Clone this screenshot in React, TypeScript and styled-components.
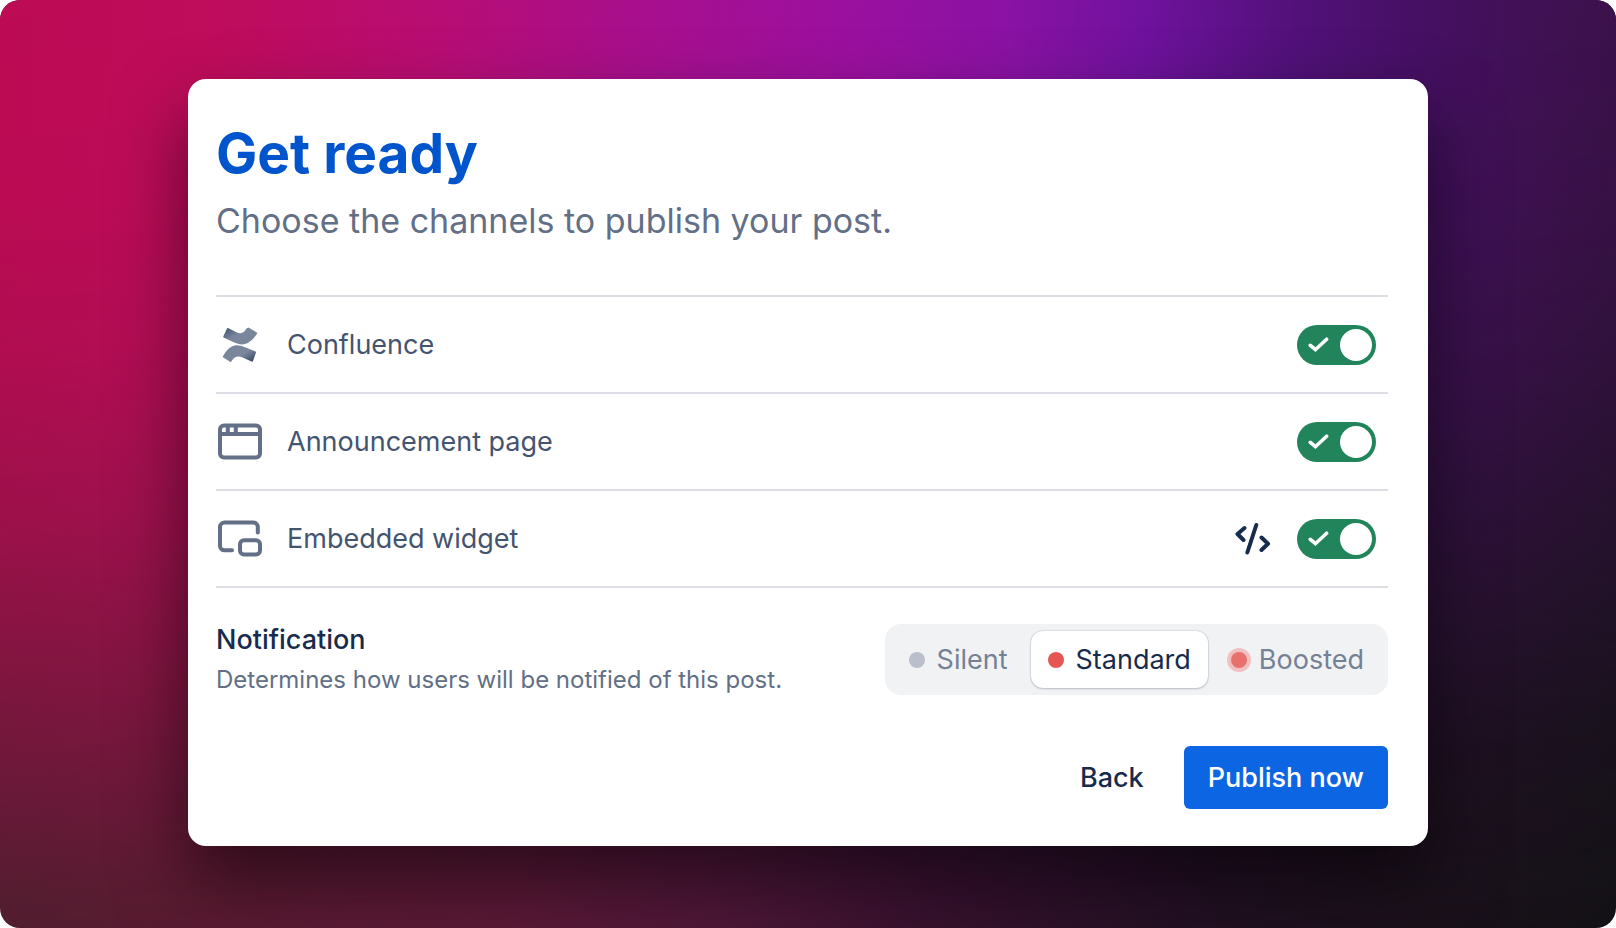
import React, { useState } from "react";
import styled, { createGlobalStyle, css } from "styled-components";

const GlobalStyle = createGlobalStyle`
  *, *::before, *::after { box-sizing: border-box; }
  body {
    margin: 0;
    background: #fff;
    font-family: Inter, "Liberation Sans", sans-serif;
    -webkit-font-smoothing: antialiased;
  }
`;

const Stage = styled.main`
  position: relative;
  isolation: isolate;
  min-height: 100vh;
  display: flex;
  align-items: center;
  justify-content: center;
  padding: 79px 24px 82px;
  border-radius: 20px;
  overflow: hidden;
  background: linear-gradient(90deg, #43202a 0%, #4f1d2c 14%, #541b30 32%, #481830 45%, #331228 58%, #20101f 75%, #141216 100%);

  /* bright band that fades towards the bottom */
  &::before {
    content: "";
    position: absolute;
    inset: 0;
    z-index: -1;
    background: linear-gradient(94deg, #bd0b54 0%, #c00c5c 13%, #b90d74 26%, #a90f8e 38%, #9d10a0 50%, #8c12a6 60%, #7112a0 68%, #53117c 77%, #461064 85%, #401152 93%, #381246 100%);
    mask-image: linear-gradient(174deg, #000 0%, rgba(0, 0, 0, 0.98) 18%, rgba(0, 0, 0, 0.89) 33%, rgba(0, 0, 0, 0.72) 48%, rgba(0, 0, 0, 0.44) 65%, rgba(0, 0, 0, 0.14) 82%, transparent 100%);
  }
`;

const Card = styled.section`
  width: 100%;
  max-width: 1240px;
  display: flex;
  flex-direction: column;
  padding: 40px 40px 37px 28px;
  border-radius: 18px;
  background: #fff;
  box-shadow: 0 36px 72px rgba(0, 0, 0, 0.55);
`;

const Title = styled.h1`
  margin: 0;
  font-size: 55px;
  line-height: 68px;
  font-weight: 700;
  color: #0055cc;
`;

const Subtitle = styled.p`
  margin: 12px 0 0;
  font-size: 34px;
  line-height: 44px;
  color: #626f86;
`;

const ChannelList = styled.ul`
  list-style: none;
  margin: 52px 0 0;
  padding: 0;
  border-top: 2px solid #dddee5;
`;

const ChannelRow = styled.li`
  display: flex;
  align-items: center;
  gap: 24px;
  height: 97px;
  padding-right: 12px;
  border-bottom: 2px solid #dddee5;
  color: #626f86;

  svg { display: block; flex: none; }
`;

const ChannelName = styled.label`
  flex: 1;
  font-size: 27px;
  line-height: 36px;
  color: #44546f;
`;

const CodeButton = styled.button`
  padding: 0;
  border: 0;
  background: none;
  color: #172b4d;
`;

const SwitchTrack = styled.span`
  position: relative;
  flex: none;
  display: flex;
  align-items: center;
  justify-content: space-between;
  width: 79px;
  height: 40px;
  padding: 0 4px 0 11px;
  border-radius: 20px;
  background: #22845a;
  color: #fff;

  &:has(input:not(:checked)) {
    flex-direction: row-reverse;
    padding: 0 11px 0 4px;
    background: #626f86;
  }
`;

const HiddenInput = styled.input`
  position: absolute;
  inset: 0;
  width: 100%;
  height: 100%;
  margin: 0;
  opacity: 0;
  cursor: pointer;
`;

const SwitchThumb = styled.span`
  width: 32px;
  height: 32px;
  border-radius: 50%;
  background: #fff;
`;

const NotificationRow = styled.fieldset`
  display: flex;
  align-items: flex-start;
  justify-content: space-between;
  min-width: 0;
  margin: 36px 0 0;
  padding: 0;
  border: 0;
`;

const NotificationTitle = styled.h2`
  margin: 0;
  font-size: 27px;
  line-height: 32px;
  font-weight: 500;
  color: #172b4d;
`;

const NotificationText = styled.p`
  margin: 8px 0 0;
  font-size: 24px;
  line-height: 32px;
  color: #626f86;
`;

const Segments = styled.div`
  display: flex;
  gap: 6px;
  height: 71px;
  padding: 7px;
  border-radius: 16px;
  background: #f1f2f4;
`;

const Segment = styled.label<{ $selected: boolean }>`
  position: relative;
  display: flex;
  align-items: center;
  gap: 12px;
  padding: 0 17px;
  border-radius: 12px;
  font-size: 27px;
  color: #758195;
  ${(p) =>
    p.$selected &&
    css`
      background: #fff;
      color: #172b4d;
      box-shadow: 0 0 2px rgba(9, 30, 66, 0.28), 0 1px 2px rgba(9, 30, 66, 0.18);
    `}
`;

const Dot = styled.span<{ $color: string; $ring?: string }>`
  width: 16px;
  height: 16px;
  border-radius: 50%;
  background: ${(p) => p.$color};
  box-shadow: 0 0 0 4px ${(p) => p.$ring ?? "transparent"};
`;

const Actions = styled.footer`
  display: flex;
  justify-content: flex-end;
  gap: 16px;
  margin-top: 50px;
`;

const Button = styled.button<{ $primary?: boolean }>`
  height: 63px;
  padding: 0 24px;
  border: 0;
  border-radius: 6px;
  font-family: inherit;
  font-size: 27px;
  font-weight: 500;
  color: ${(p) => (p.$primary ? "#fff" : "#172b4d")};
  background: ${(p) => (p.$primary ? "#0c66e4" : "transparent")};
`;

const ConfluenceIcon = () => (
  <svg width="47" height="44" viewBox="1 0 47 44" aria-hidden="true">
    <defs>
      <linearGradient id="cfTop" x1="0" y1="0.1" x2="0.7" y2="0.6">
        <stop offset="0" stopColor="#44546f" />
        <stop offset="0.6" stopColor="#7a869c" />
      </linearGradient>
      <linearGradient id="cfBottom" x1="1" y1="0.9" x2="0.3" y2="0.4">
        <stop offset="0" stopColor="#344563" />
        <stop offset="0.6" stopColor="#7a869c" />
      </linearGradient>
    </defs>
    <path fill="url(#cfTop)" d="M13 5 22 9.400Q28 12 31.500 5.500L33.500 4.500 42.500 10Q36.500 19.500 29 21.300 24 22 16 18L8.500 14.500Q8 14 8.500 13L12 5.500Q12.400 4.700 13 5Z" />
    <path fill="url(#cfBottom)" d="M37 38.700 27 34.300Q20.500 32 17 37.500L15.800 39.200 7.500 34Q12.500 24 20.500 22.300 25.500 21.700 32 25L40.500 28.500Q41.300 29 40.800 30L38 38Q37.600 39 37 38.700Z" />
  </svg>
);

const WindowIcon = () => (
  <svg width="47" height="44" viewBox="0 0 47 44" fill="none" stroke="currentColor" strokeWidth="4" aria-hidden="true">
    <rect x="4" y="5.500" width="40" height="32" rx="4" />
    <path d="M4 14H44M11.800 6v8M19.800 6v8" />
  </svg>
);

const WidgetIcon = () => (
  <svg width="47" height="44" viewBox="0 0 47 44" fill="none" stroke="currentColor" strokeWidth="4" strokeLinecap="round" aria-hidden="true">
    <path d="M41.800 15.500V10a4.500 4.500 0 0 0-4.500-4.500H8.500A4.500 4.500 0 0 0 4 10v18.800a4.500 4.500 0 0 0 4.500 4.500H16" />
    <rect x="24" y="23.300" width="20" height="14.200" rx="4" />
  </svg>
);

const CodeIcon = () => (
  <svg width="38" height="34" viewBox="0 0 38 34" fill="none" stroke="currentColor" strokeWidth="4" strokeLinecap="round" strokeLinejoin="round" aria-hidden="true">
    <path d="M9.500 6 2.500 12 8.500 18M26.500 15.500 33 21.800 26.500 28" />
    <path d="M21.300 3 12.300 30.500" />
  </svg>
);

const CheckIcon = () => (
  <svg width="22" height="18" viewBox="0 0 22 18" fill="none" stroke="currentColor" strokeWidth="3.600" strokeLinecap="round" aria-hidden="true">
    <path d="M2.300 9.300 7.400 13.700 18.600 3.200" />
  </svg>
);

const channels = [
  { id: "confluence", name: "Confluence", Icon: ConfluenceIcon, code: false },
  { id: "page", name: "Announcement page", Icon: WindowIcon, code: false },
  { id: "widget", name: "Embedded widget", Icon: WidgetIcon, code: true },
];

const levels = [
  { name: "Silent", color: "#b9bfcb", ring: undefined },
  { name: "Standard", color: "#e65753", ring: undefined },
  { name: "Boosted", color: "#e8706d", ring: "#f2c0c1" },
];

export default function App() {
  const [level, setLevel] = useState("Standard");
  return (
    <>
      <GlobalStyle />
      <Stage>
        <Card>
          <Title>Get ready</Title>
          <Subtitle>Choose the channels to publish your post.</Subtitle>
          <ChannelList>
            {channels.map(({ id, name, Icon, code }) => (
              <ChannelRow key={id}>
                <Icon />
                <ChannelName htmlFor={id}>{name}</ChannelName>
                {code && (
                  <CodeButton type="button" aria-label="Get embed code">
                    <CodeIcon />
                  </CodeButton>
                )}
                <SwitchTrack>
                  <HiddenInput id={id} type="checkbox" role="switch" defaultChecked />
                  <CheckIcon />
                  <SwitchThumb />
                </SwitchTrack>
              </ChannelRow>
            ))}
          </ChannelList>
          <NotificationRow aria-labelledby="notification-title">
            <div>
              <NotificationTitle id="notification-title">Notification</NotificationTitle>
              <NotificationText>Determines how users will be notified of this post.</NotificationText>
            </div>
            <Segments>
              {levels.map(({ name, color, ring }) => (
                <Segment key={name} $selected={level === name}>
                  <HiddenInput type="radio" name="level" checked={level === name} onChange={() => setLevel(name)} />
                  <Dot $color={color} $ring={ring} />
                  {name}
                </Segment>
              ))}
            </Segments>
          </NotificationRow>
          <Actions>
            <Button type="button">Back</Button>
            <Button type="button" $primary>Publish now</Button>
          </Actions>
        </Card>
      </Stage>
    </>
  );
}
